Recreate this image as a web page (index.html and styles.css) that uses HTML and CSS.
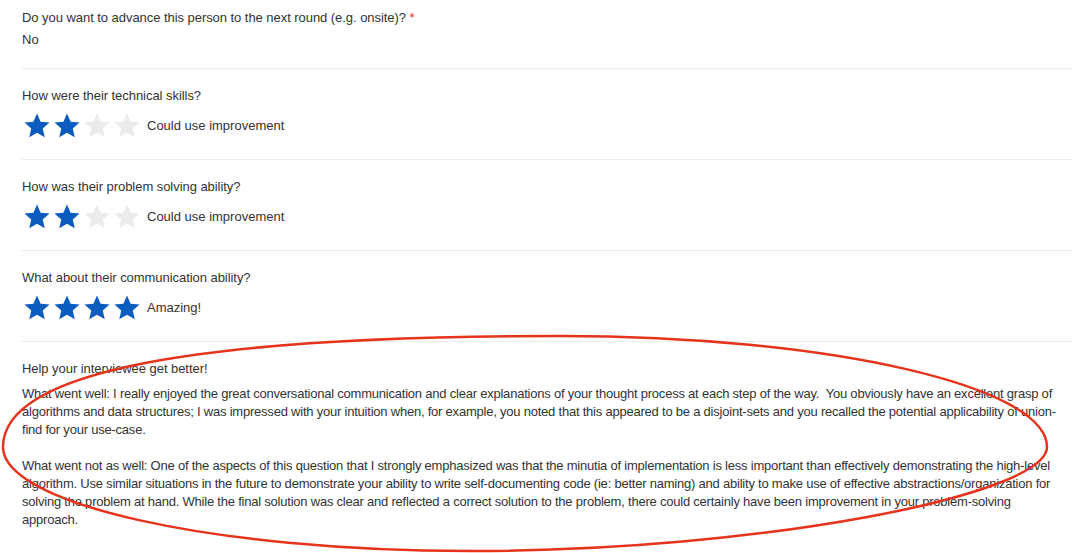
FILE: index.html
```html
<!DOCTYPE html>
<html lang="en">
<head>
    <meta charset="UTF-8">
    <title>Interview Feedback</title>
    <link rel="stylesheet" href="styles.css">
</head>
<body>
    <div class="feedback">
        <div class="section">
            <div class="question">Do you want to advance this person to the next round (e.g. onsite)? <span class="required">*</span></div>
            <div class="answer">No</div>
        </div>

        <div class="section">
            <div class="question">How were their technical skills?</div>
            <div class="rating">
                <svg class="star on" viewBox="0 0 24 24"><path d="M12 2l2.9 6.6 7.1.6-5.4 4.7 1.6 7.1L12 17.3 5.8 21l1.6-7.1L2 9.2l7.1-.6z"/></svg>
                <svg class="star on" viewBox="0 0 24 24"><path d="M12 2l2.9 6.6 7.1.6-5.4 4.7 1.6 7.1L12 17.3 5.8 21l1.6-7.1L2 9.2l7.1-.6z"/></svg>
                <svg class="star" viewBox="0 0 24 24"><path d="M12 2l2.9 6.6 7.1.6-5.4 4.7 1.6 7.1L12 17.3 5.8 21l1.6-7.1L2 9.2l7.1-.6z"/></svg>
                <svg class="star" viewBox="0 0 24 24"><path d="M12 2l2.9 6.6 7.1.6-5.4 4.7 1.6 7.1L12 17.3 5.8 21l1.6-7.1L2 9.2l7.1-.6z"/></svg>
                <span class="rating-label">Could use improvement</span>
            </div>
        </div>

        <div class="section">
            <div class="question">How was their problem solving ability?</div>
            <div class="rating">
                <svg class="star on" viewBox="0 0 24 24"><path d="M12 2l2.9 6.6 7.1.6-5.4 4.7 1.6 7.1L12 17.3 5.8 21l1.6-7.1L2 9.2l7.1-.6z"/></svg>
                <svg class="star on" viewBox="0 0 24 24"><path d="M12 2l2.9 6.6 7.1.6-5.4 4.7 1.6 7.1L12 17.3 5.8 21l1.6-7.1L2 9.2l7.1-.6z"/></svg>
                <svg class="star" viewBox="0 0 24 24"><path d="M12 2l2.9 6.6 7.1.6-5.4 4.7 1.6 7.1L12 17.3 5.8 21l1.6-7.1L2 9.2l7.1-.6z"/></svg>
                <svg class="star" viewBox="0 0 24 24"><path d="M12 2l2.9 6.6 7.1.6-5.4 4.7 1.6 7.1L12 17.3 5.8 21l1.6-7.1L2 9.2l7.1-.6z"/></svg>
                <span class="rating-label">Could use improvement</span>
            </div>
        </div>

        <div class="section">
            <div class="question">What about their communication ability?</div>
            <div class="rating">
                <svg class="star on" viewBox="0 0 24 24"><path d="M12 2l2.9 6.6 7.1.6-5.4 4.7 1.6 7.1L12 17.3 5.8 21l1.6-7.1L2 9.2l7.1-.6z"/></svg>
                <svg class="star on" viewBox="0 0 24 24"><path d="M12 2l2.9 6.6 7.1.6-5.4 4.7 1.6 7.1L12 17.3 5.8 21l1.6-7.1L2 9.2l7.1-.6z"/></svg>
                <svg class="star on" viewBox="0 0 24 24"><path d="M12 2l2.9 6.6 7.1.6-5.4 4.7 1.6 7.1L12 17.3 5.8 21l1.6-7.1L2 9.2l7.1-.6z"/></svg>
                <svg class="star on" viewBox="0 0 24 24"><path d="M12 2l2.9 6.6 7.1.6-5.4 4.7 1.6 7.1L12 17.3 5.8 21l1.6-7.1L2 9.2l7.1-.6z"/></svg>
                <span class="rating-label">Amazing!</span>
            </div>
        </div>

        <div class="section last">
            <div class="question">Help your interviewee get better!</div>
            <div class="comments">
                <p>What went well: I really enjoyed the great conversational communication and clear explanations of your thought process at each step of the way.&nbsp; You obviously have an excellent grasp of algorithms and data structures; I was impressed with your intuition when, for example, you noted that this appeared to be a disjoint-sets and you recalled the potential applicability of union-find for your use-case.</p>
                <p>What went not as well: One of the aspects of this question that I strongly emphasized was that the minutia of implementation is less important than effectively demonstrating the high-level algorithm. Use similar situations in the future to demonstrate your ability to write self-documenting code (ie: better naming) and ability to make use of effective abstractions/organization for solving the problem at hand. While the final solution was clear and reflected a correct solution to the problem, there could certainly have been improvement in your problem-solving approach.</p>
            </div>
        </div>
    </div>

    <!-- hand-drawn highlight over the comments -->
    <svg class="highlight" viewBox="0 0 1080 553">
        <path d="M560 336 C828 336 1047 386 1047 447 C1047 495 760 551 470 551 C213 551 3 504 3 447 C3 370 200 336 560 336 Z"/>
    </svg>
</body>
</html>
```

FILE: styles.css
```css
body {
    margin: 0;
    font-family: "Liberation Sans", Arial, sans-serif;
    font-size: 13px;
    line-height: 18px;
    color: #333;
    background-color: white;
    position: relative;
    overflow: hidden;
}
.feedback {
    padding: 0 7px 0 22px;
}
.section {
    padding: 18px 0 18px;
    border-bottom: 1px solid #ececec;
}
.section:first-child {
    padding: 9px 0 19px;
}
.section.last {
    border-bottom: none;
}
.question {
    margin-bottom: 6px;
    letter-spacing: -0.05px;
}
.required {
    color: #e0352b;
}
.answer {
    margin-top: -2px;
}
.rating {
    display: flex;
    align-items: center;
    height: 30px;
}
.star {
    width: 30px;
    height: 30px;
    fill: #ebebeb;
}
.star.on {
    fill: #0a5cbf;
}
.rating-label {
    margin-left: 5px;
}
.comments {
    margin-top: 7px;
    padding-right: 6px;
    letter-spacing: -0.22px;
}
.comments p {
    margin: 0 0 18px;
}
.highlight {
    position: absolute;
    top: 0;
    left: 0;
    width: 1080px;
    height: 553px;
    pointer-events: none;
    fill: none;
    stroke: #e5331c;
    stroke-width: 2.5;
}
```
